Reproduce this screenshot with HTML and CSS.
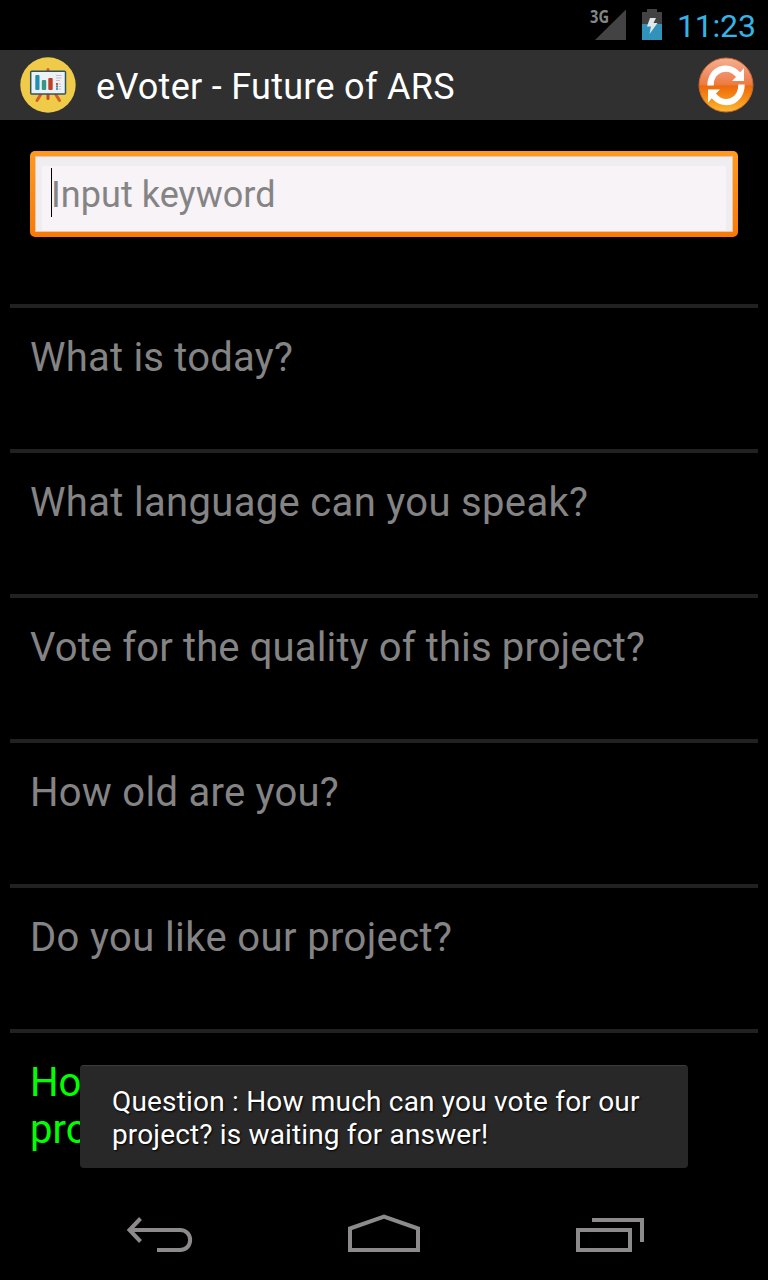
FILE: index.html
```html
<!DOCTYPE html>
<html lang="en">
<head>
<meta charset="utf-8">
<title>eVoter - Future of ARS</title>
<link rel="stylesheet" href="styles.css">
</head>
<body>
<div class="screen">
  <div class="status-bar">
    <svg class="signal" width="40" height="34" viewBox="0 0 40 34">
      <path d="M38 1.500V32H7Z" fill="#434343"/>
      <text class="network" x="2" y="15" textLength="19" lengthAdjust="spacingAndGlyphs">3G</text>
    </svg>
    <svg class="battery" width="20" height="31" viewBox="0 0 20 31">
      <path d="M5 0H15V3H20V15H0V3H5Z" fill="#434343"/>
      <path d="M0 15H20V31H0Z" fill="#3192bb"/>
      <path d="M8 9H14L11.500 14H15.500L7.500 25L9 17.500H5Z" fill="#dfe9ec"/>
    </svg>
    <span class="clock">11:23</span>
  </div>
  <header class="action-bar">
    <svg class="logo" width="56" height="56" viewBox="0 0 56 56">
      <circle cx="28" cy="28" r="27.700" fill="#efcb49"/>
      <g fill="none" stroke="#d65b2b" stroke-width="3" stroke-linecap="round">
        <path d="M28 12.500V16M21 37L17 43.500M35.500 37L39.500 43.500"/>
        <path d="M28 37V41.500" stroke="#c8472b"/>
      </g>
      <rect x="10.700" y="14.200" width="34.800" height="22.800" rx="1" fill="#edf0f5" stroke="#2e5563" stroke-width="1.500"/>
      <rect x="15.300" y="18" width="4.200" height="15" rx="1" fill="#208fb8"/>
      <rect x="21.800" y="23" width="4.400" height="10" rx="1" fill="#389784"/>
      <rect x="28.300" y="21" width="4.400" height="12" rx="1" fill="#bd3e29"/>
      <path d="M36 18.500H41.700M36 21H41.700M36 23.500H40M38.500 27H41M38.500 29.500H41M38.500 32H41" stroke="#c2c3c8" stroke-width="1"/>
      <path d="M36 26H38V28.500H36Z" fill="#d1503a"/>
      <path d="M36 28.800H38V30.500H36Z" fill="#389784"/>
      <path d="M36 30.800H38V33H36Z" fill="#4a9fc0"/>
    </svg>
    <h1 class="title">eVoter - Future of ARS</h1>
    <svg class="refresh" width="56" height="56" viewBox="0 0 56 56">
      <defs>
        <linearGradient id="orb" x1="0" y1="0" x2="0" y2="1">
          <stop offset="0" stop-color="#f6b08f"/>
          <stop offset=".28" stop-color="#f0906a"/>
          <stop offset=".49" stop-color="#ee7b40"/>
          <stop offset=".52" stop-color="#ec6a0c"/>
          <stop offset=".75" stop-color="#f58e17"/>
          <stop offset="1" stop-color="#fdbb35"/>
        </linearGradient>
      </defs>
      <circle cx="28" cy="28" r="27" fill="url(#orb)" stroke="#c9682f" stroke-width="1"/>
      <g fill="none" stroke="#fff" stroke-width="6.400">
        <path d="M12.500 28.500C12.500 12 30 6 40.500 18"/>
        <path d="M43.500 27.500C43.500 45 26 51 15.500 38.500"/>
      </g>
      <path d="M46 11V24H34L38 20Z" fill="#fff"/>
      <path d="M10 45.500V32.500H22L18 36.500Z" fill="#fff"/>
    </svg>
  </header>
  <main class="content">
    <div class="search">
      <div class="search-field"><span class="caret"></span><span class="placeholder">Input keyword</span></div>
    </div>
    <ul class="questions">
      <li class="question q1">What is today?</li>
      <li class="question q2">What language can you speak?</li>
      <li class="question q3">Vote for the quality of this project?</li>
      <li class="question q4">How old are you?</li>
      <li class="question q5">Do you like our project?</li>
      <li class="question active">How much can you vote for our<br>project?</li>
    </ul>
  </main>
  <nav class="nav-bar">
    <svg width="68" height="44" viewBox="0 0 68 44" fill="none" stroke="#8c8a8b" stroke-width="4">
      <path d="M3.500 18H54C67.500 18 67.500 38 54 38H31"/>
      <path d="M14.500 6.500L3.500 18L14.500 29.500"/>
    </svg>
    <svg width="72" height="44" viewBox="0 0 72 44" fill="none" stroke="#8c8a8b" stroke-width="4">
      <path d="M2 38V16.500L36 4.500L70 16.500V38Z"/>
    </svg>
    <svg width="68" height="44" viewBox="0 0 68 44" fill="none" stroke="#8c8a8b" stroke-width="4">
      <path d="M2 18H54V38H2ZM16 8H66V30"/>
    </svg>
  </nav>
  <div class="toast"><div class="toast-first">Question : How much can you vote for our</div><div class="toast-second">project? is waiting for answer!</div></div>
</div>
</body>
</html>
```
FILE: styles.css
```css
* { box-sizing: border-box; }
body {
  margin: 0;
  background: #000;
  font-family: Roboto, "Liberation Sans", sans-serif;
}
.screen {
  position: relative;
  display: flex;
  flex-direction: column;
  width: 768px;
  height: 1280px;
  overflow: hidden;
  background: #000;
}
.status-bar {
  display: flex;
  justify-content: flex-end;
  height: 50px;
  padding: 8px 12px 0 0;
}
.signal { margin-right: 14px; overflow: visible; }
.network {
  font: bold 17px "Open Sans", sans-serif;
  fill: #868686;
}
.battery { margin: 1px 15px 0 0; }
.clock {
  width: 79px;
  font-size: 32px;
  line-height: 36px;
  letter-spacing: -0.2px;
  white-space: nowrap;
  color: #33b5e5;
}
.action-bar {
  display: flex;
  align-items: center;
  height: 70px;
  padding: 0 14px 0 20px;
  background: #303030;
}
.title {
  flex: 1;
  margin: 3px 0 0 20px;
  font-size: 36px;
  font-weight: 400;
  line-height: 42px;
  letter-spacing: 0.29px;
  white-space: nowrap;
  color: #fff;
}
.content { flex: 1; padding: 31px 10px 0; overflow: hidden; }
.search {
  height: 86px;
  margin: 0 20px;
  padding: 5px;
  border-radius: 5px;
  background: linear-gradient(#ff9a20, #fa7806);
}
.search-field {
  display: flex;
  height: 76px;
  padding: 11px 0 0 15px;
  border: 1px solid #e8c8ac;
  background: #f7f3f7;
  box-shadow: inset 0 9px 0 #efedef, inset 6px 0 0 #efedef, inset -6px 0 0 #efedef;
}
.caret { width: 1px; height: 49px; background: #000; }
.placeholder {
  font-size: 36px;
  line-height: 54px;
  margin-left: -1px;
  letter-spacing: 0.05px;
  white-space: nowrap;
  color: #858485;
}
.questions { margin: 67px 0 0; padding: 0; list-style: none; }
.question {
  height: 145px;
  padding: 26px 20px 0;
  border-top: 4px solid #212121;
  font-size: 40px;
  line-height: 47px;
  color: #858485;
}
.q1 { letter-spacing: 0.22px; }
.q2 { letter-spacing: 0.33px; }
.q3 { letter-spacing: 0.13px; }
.q4 { letter-spacing: 0.26px; }
.q5 { letter-spacing: 0.37px; }
.active { color: #0f0; }
.nav-bar {
  display: flex;
  justify-content: space-between;
  height: 96px;
  padding: 28px 124px 0 126px;
}
.nav-bar svg:nth-child(2) { margin-left: -2px; }
.toast {
  position: absolute;
  left: 80px;
  top: 1065px;
  width: 608px;
  height: 103px;
  padding: 19px 32px 0;
  border-top: 1px solid #3c3c3c;
  border-radius: 4px;
  background: #282828;
  font-size: 28px;
  line-height: 33px;
  white-space: nowrap;
  color: #fff;
  text-shadow: 1px 1px 2px #000;
}
.toast-first { letter-spacing: 0.19px; }
.toast-second { letter-spacing: 0.15px; }
```
